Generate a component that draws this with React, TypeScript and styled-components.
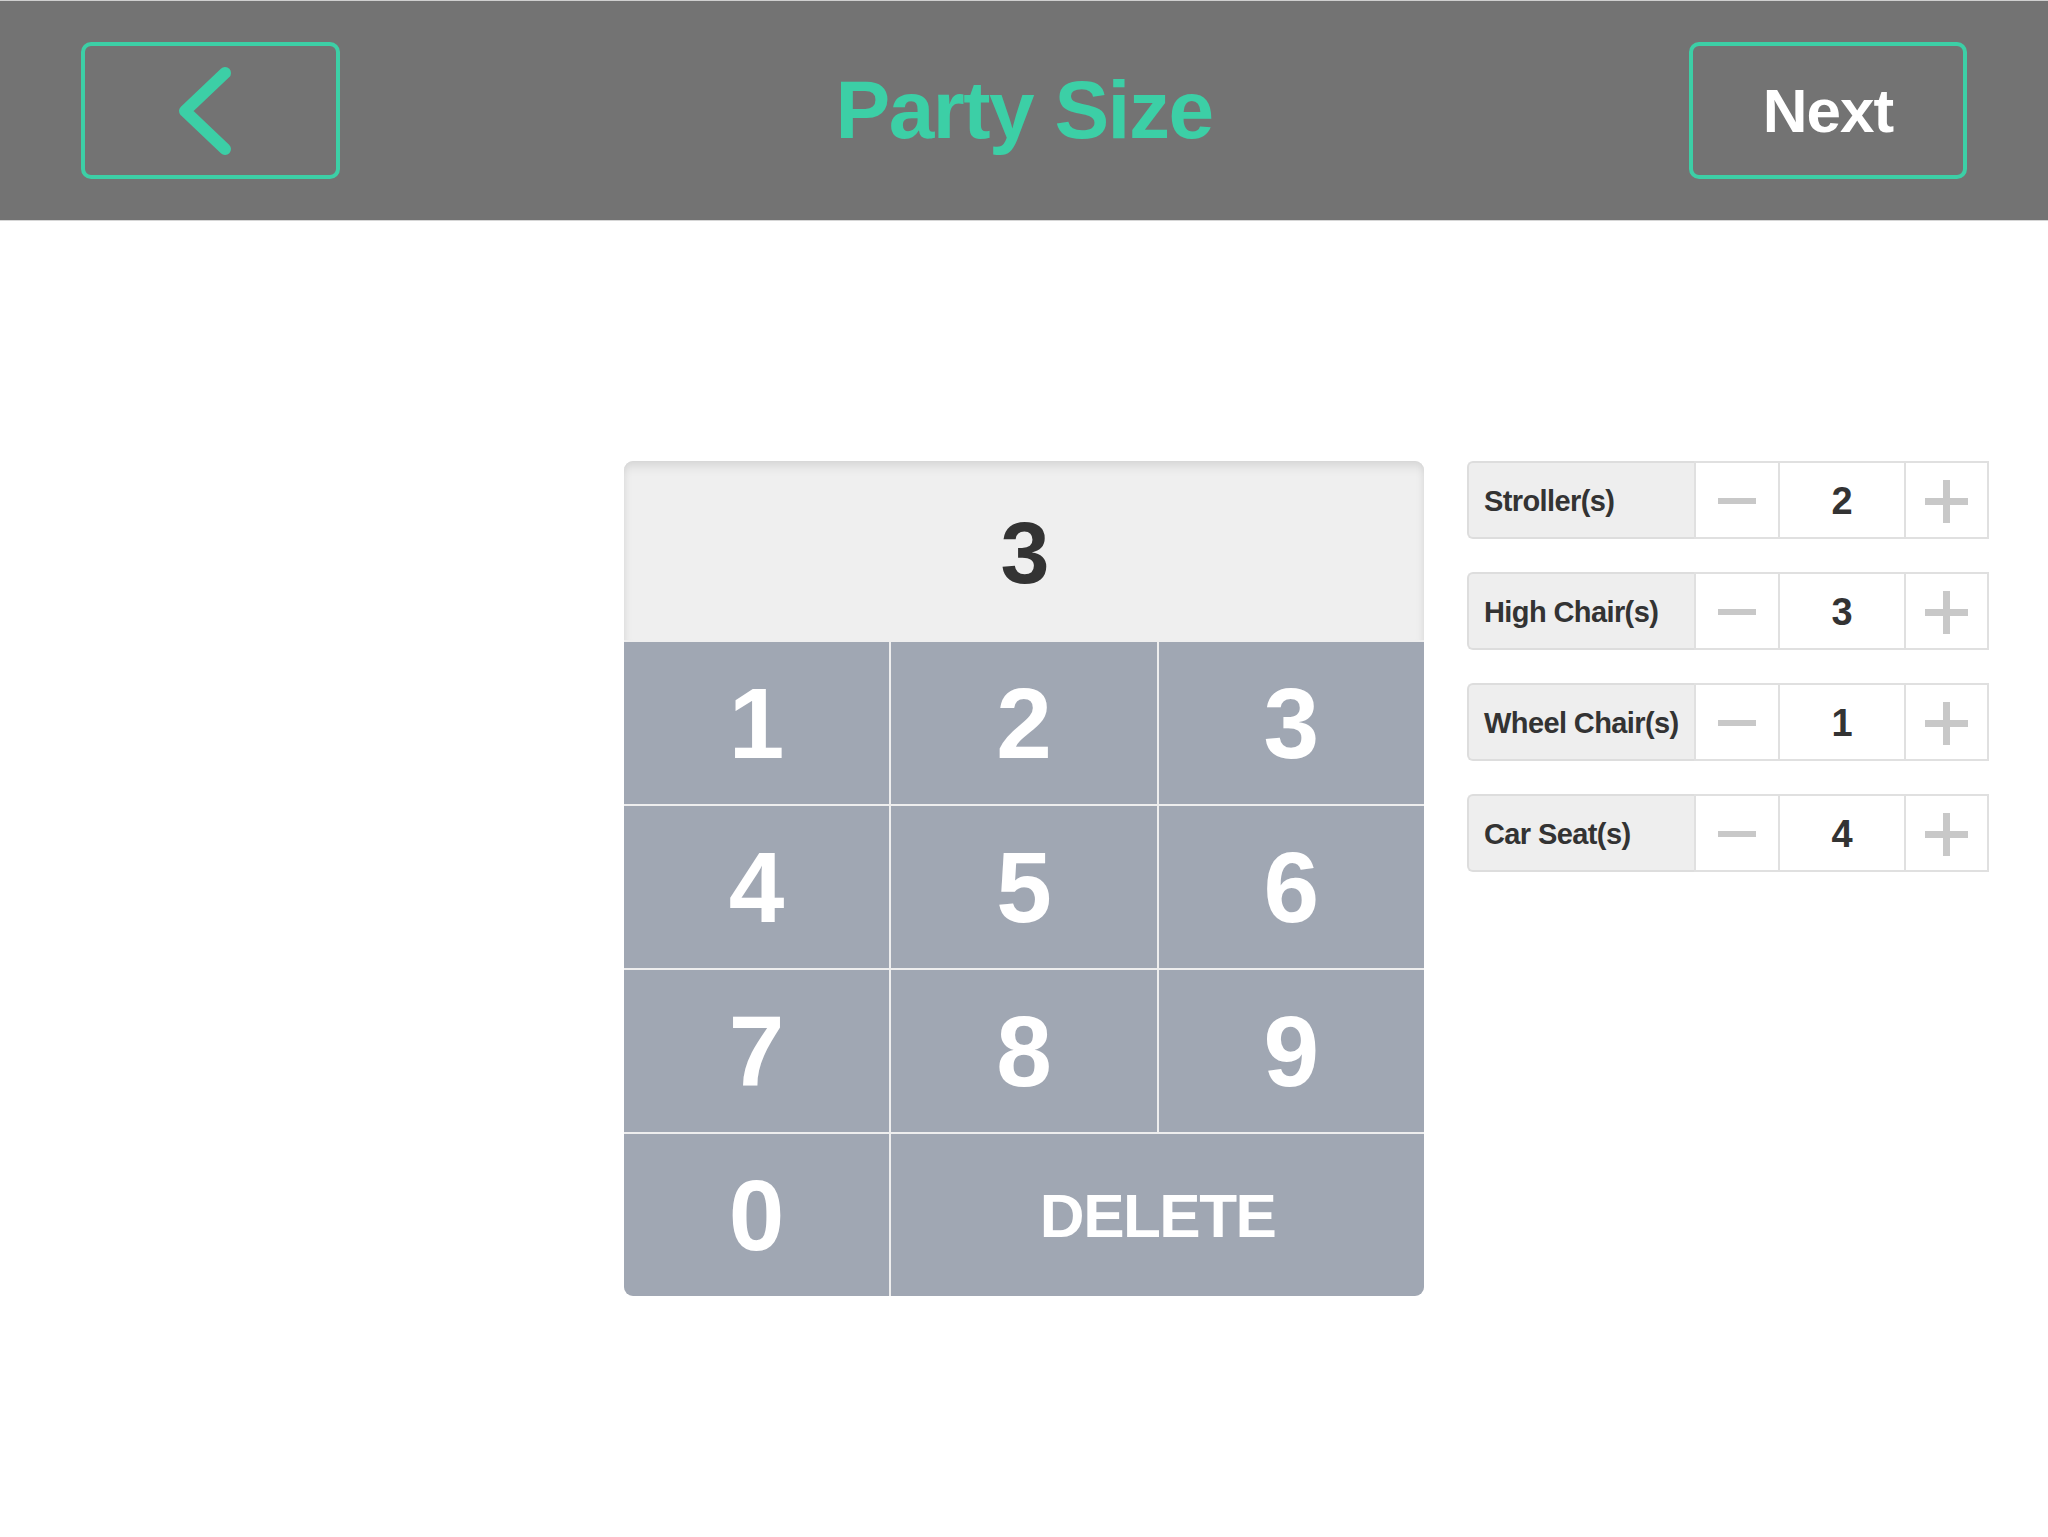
import React from "react";
import styled, { createGlobalStyle } from "styled-components";

const GlobalStyle = createGlobalStyle`
  html, body { margin: 0; padding: 0; background: #ffffff; }
  body { font-family: "Liberation Sans", Arial, Helvetica, sans-serif; }
  * { box-sizing: border-box; }
`;

const GREEN = "#3ccfa6";

const Page = styled.div`
  width: 2048px;
  min-height: 1537px;
  background: #ffffff;
`;

const Header = styled.header`
  height: 221px;
  background: #737373;
  border-top: 1px solid #cfcfcf;
  border-bottom: 1px solid #d6d6d6;
  display: grid;
  grid-template-columns: 1fr auto 1fr;
  align-items: center;
  padding: 0 81px;
`;

const OutlineButton = styled.button<{ $w: number; $align: "start" | "end" }>`
  width: ${(p) => p.$w}px;
  height: 137px;
  justify-self: ${(p) => p.$align};
  background: transparent;
  border: 4px solid ${GREEN};
  border-radius: 10px;
  display: flex;
  align-items: center;
  justify-content: center;
  padding: 0;
  color: #ffffff;
  font-family: "Liberation Sans", Arial, sans-serif;
  font-weight: 700;
  font-size: 62px;
  letter-spacing: -1px;
  cursor: pointer;
`;

const Title = styled.h1`
  margin: 0;
  color: ${GREEN};
  font-family: "Liberation Sans", Arial, sans-serif;
  font-weight: 700;
  font-size: 82px;
  letter-spacing: -1.5px;
  line-height: 1;
  padding-bottom: 2px;
`;

const Main = styled.main`
  display: grid;
  grid-template-columns: 1fr 800px 1fr;
  align-items: start;
  padding-top: 240px;
`;

const Keypad = styled.div`
  grid-column: 2;
  width: 800px;
  display: grid;
  grid-template-columns: repeat(3, 1fr);
  grid-template-rows: 179px repeat(4, 162px);
  gap: 2px;
  background: #eeeeee;
  border-radius: 9px;
  overflow: hidden;
`;

const Display = styled.div`
  grid-column: 1 / -1;
  background: #efefef;
  box-shadow: inset 0 10px 14px -8px rgba(0, 0, 0, 0.16),
    inset 8px 0 10px -8px rgba(0, 0, 0, 0.08),
    inset -8px 0 10px -8px rgba(0, 0, 0, 0.08);
  display: flex;
  align-items: center;
  justify-content: center;
  color: #333333;
  font-weight: 700;
  font-size: 88px;
  letter-spacing: -2px;
  padding-top: 4px;
`;

const Key = styled.button<{ $span?: number; $small?: boolean }>`
  grid-column: span ${(p) => p.$span ?? 1};
  background: #a0a7b3;
  border: none;
  padding: 0;
  color: #ffffff;
  font-family: "Liberation Sans", Arial, sans-serif;
  font-weight: 700;
  font-size: ${(p) => (p.$small ? "62px" : "100px")};
  letter-spacing: ${(p) => (p.$small ? "-1.5px" : "0")};
  display: flex;
  align-items: center;
  justify-content: center;
  cursor: pointer;
`;

const Side = styled.div`
  grid-column: 3;
  padding-left: 43px;
  display: flex;
  flex-direction: column;
  gap: 33px;
`;

const CounterRow = styled.div`
  width: 522px;
  height: 78px;
  display: grid;
  grid-template-columns: 227px 84px 126px 85px;
`;

const Label = styled.div`
  background: #eeeeee;
  border: 2px solid #dddddd;
  border-right: none;
  border-radius: 6px 0 0 6px;
  display: flex;
  align-items: center;
  padding-left: 15px;
  padding-top: 2px;
  color: #333333;
  font-weight: 700;
  font-size: 29px;
  letter-spacing: -0.6px;
  white-space: nowrap;
`;

const Cell = styled.div<{ $last?: boolean }>`
  background: #ffffff;
  border: 2px solid #e0e0e0;
  border-right: ${(p) => (p.$last ? "2px solid #e0e0e0" : "none")};
  display: flex;
  align-items: center;
  justify-content: center;
  color: #333333;
  font-weight: 700;
  font-size: 38px;
  padding-top: 2px;
`;

const MinusBar = styled.span`
  display: block;
  width: 38px;
  height: 6px;
  background: #c8c8c8;
`;

const PlusIcon = styled.span`
  position: relative;
  display: block;
  width: 43px;
  height: 43px;
  &::before,
  &::after {
    content: "";
    position: absolute;
    background: #c8c8c8;
  }
  &::before {
    left: 0;
    right: 0;
    top: 18px;
    height: 7px;
  }
  &::after {
    top: 0;
    bottom: 0;
    left: 18px;
    width: 7px;
  }
`;

const counters = [
  { label: "Stroller(s)", value: 2 },
  { label: "High Chair(s)", value: 3 },
  { label: "Wheel Chair(s)", value: 1 },
  { label: "Car Seat(s)", value: 4 },
];

export default function App() {
  return (
    <Page>
      <GlobalStyle />
      <Header>
        <OutlineButton $w={259} $align="start" aria-label="Back">
          <svg width="64" height="94" viewBox="0 0 64 94" fill="none" style={{ marginLeft: -8 }}>
            <polyline
              points="50,9 10,47 50,85"
              stroke={GREEN}
              strokeWidth="12"
              strokeLinecap="round"
              strokeLinejoin="round"
            />
          </svg>
        </OutlineButton>
        <Title>Party Size</Title>
        <OutlineButton $w={278} $align="end">
          Next
        </OutlineButton>
      </Header>
      <Main>
        <Keypad>
          <Display>3</Display>
          {["1", "2", "3", "4", "5", "6", "7", "8", "9", "0"].map((d) => (
            <Key key={d}>{d}</Key>
          ))}
          <Key $span={2} $small>
            DELETE
          </Key>
        </Keypad>
        <Side>
          {counters.map((c) => (
            <CounterRow key={c.label}>
              <Label>{c.label}</Label>
              <Cell>
                <MinusBar />
              </Cell>
              <Cell>{c.value}</Cell>
              <Cell $last>
                <PlusIcon />
              </Cell>
            </CounterRow>
          ))}
        </Side>
      </Main>
    </Page>
  );
}
